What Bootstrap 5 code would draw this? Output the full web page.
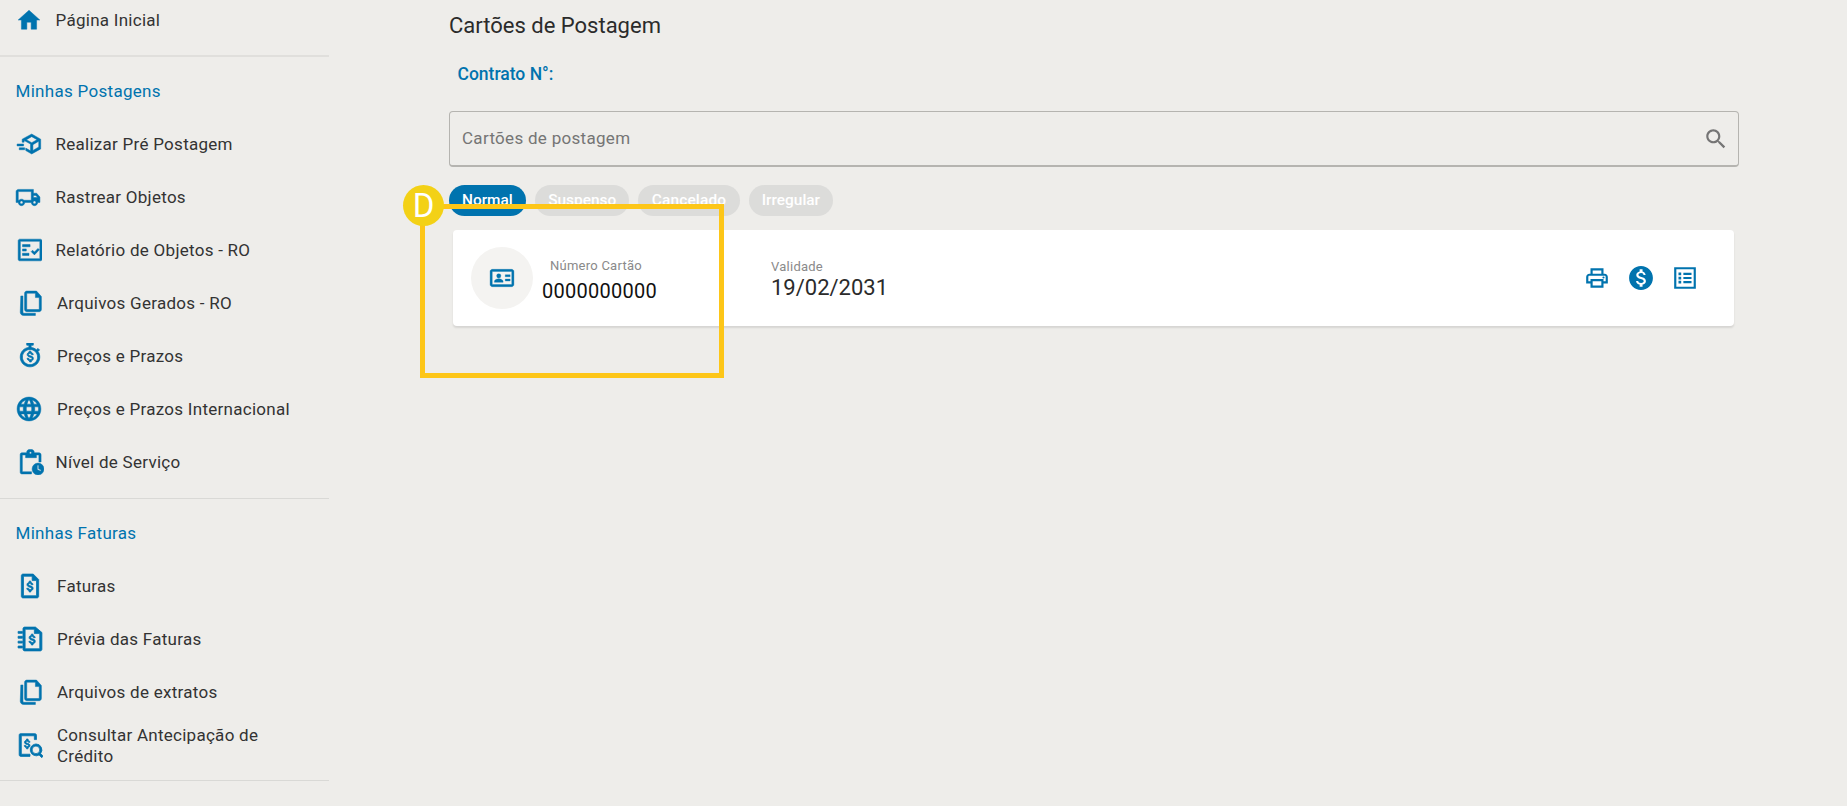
<!DOCTYPE html>
<html lang="pt-BR">
<head>
<meta charset="utf-8">
<title>Cartões de Postagem</title>
<link href="https://cdn.jsdelivr.net/npm/bootstrap@5.3.0/dist/css/bootstrap.min.css" rel="stylesheet">
<style>
html,body{height:806px;overflow:hidden}
body{background:#eeedea;font-family:Roboto,"Liberation Sans",sans-serif;color:#333;position:relative}
.shell{height:806px}
.side{width:329px;flex:none}
.side-rule{height:1px;background:#d9d9d6;margin:0;opacity:1;border:0}
.side-rule.thick{height:2px;background:#e0dfdc;margin-top:15px}
.side-rule.mid{margin-top:10px}
.side-rule.end{margin-top:8px}
.side-head{color:#0073ae;font-size:17px;line-height:21px;letter-spacing:.3px;padding-left:15.500px;margin-top:24px;margin-bottom:15px}
.side-item{height:53px;color:#333;font-size:17px;letter-spacing:.27px;line-height:21px;text-decoration:none}
.side-item.first-row{height:40px}
.side-item.tall-row{height:54px}
.side-item .lbl{display:block;max-width:250px;position:relative;top:.5px}
.side-ico{width:55.500px;flex:none;padding-left:16px;display:flex}
.side-ico.wide{width:57px;padding-left:17px}
.side-ico.globe{padding-left:16px}
.side-ico.clip{padding-left:18px}
.side-ico svg{width:26px;height:26px;fill:#0073ae;stroke:#0073ae;stroke-width:.45}
.side-ico svg.truck{margin-left:-1px}
.side-ico svg.bold{stroke-width:.7}
.main-col{padding-left:120px;width:1410px}
.page-title{font-size:22px;line-height:26px;font-weight:400;color:#2b2b2b;margin:13px 0 0}
.contract{color:#0073ae;font-size:17.500px;line-height:21px;font-weight:500;margin:25px 0 0 8.500px}
.search-box{height:56px;border:1px solid #b5b4b0;border-bottom-width:2px;border-radius:4px;margin:26px 0 0;background:transparent;padding:0 12px}
.search-box input{background:transparent;border:0;outline:0;font-size:17px;letter-spacing:.3px;padding:0;flex:1;color:#757575}
.search-box input::placeholder{color:#757575;opacity:1}
.search-box svg{width:26px;height:26px;fill:#757575;margin-right:-3px}
.chips{margin-top:18px;gap:9px}
.chip-item{height:31px;border-radius:16px;background:#dcdcda;color:#fff;font-size:15.400px;font-weight:500;padding:0 13px;border:0;display:flex;align-items:center}
.chip-item.on{background:#0073ae;padding-right:13.500px}
.chip-item.wider{padding:0 13.500px;letter-spacing:.2px}
.post-card{margin:14px 5px 0 4px;height:96px;border:0;border-radius:4px;box-shadow:0 2px 2px rgba(0,0,0,.1);background:#fff;padding:0 35px 0 18px}
.round-ico{width:62px;height:62px;border-radius:50%;background:#f4f3f1;flex:none}
.round-ico svg{width:26px;height:26px;fill:#0073ae;stroke:#0073ae;stroke-width:.3}
.field-label{font-size:13px;line-height:16px;color:#8a8a8a;letter-spacing:.25px}
.num-col{margin-left:9px;width:229px;padding-top:5px}
.num-col .field-label{padding-left:8px}
.num-val{font-size:20px;line-height:26px;color:#111;letter-spacing:.25px;margin-top:4px}
.date-val{font-size:22px;line-height:26px;color:#2b2b2b}
.date-col{margin-top:3px}
.act-group{gap:18px;margin-left:-1px;position:relative;right:1px}
.act-group svg{width:26px;height:26px;fill:#0073ae;display:block}
.yellow-box{position:absolute;left:420px;top:204px;width:304px;height:174px;border:5px solid #fdc618;pointer-events:none}
.yellow-dot{position:absolute;left:403px;top:185px;width:41px;height:41px;border-radius:50%;background:#f3d116;color:#fff;font-size:33px;font-weight:400;line-height:41px;text-align:center}
</style>
</head>
<body>
<div class="d-flex shell">
  <nav class="side d-flex flex-column">
    <a class="side-item first-row d-flex align-items-center" href="#">
      <span class="side-ico"><svg viewBox="0 0 24 24"><path d="M10 20.500v-6.500h4v6.500h5v-8.500h3L12 3 2 12h3v8.500z"/></svg></span><span class="lbl">Página Inicial</span>
    </a>
    <hr class="side-rule thick">
    <div class="side-head">Minhas Postagens</div>
    <a class="side-item d-flex align-items-center" href="#">
      <span class="side-ico"><svg viewBox="0 0 24 24"><path d="M14.500 2.800 22.800 7.500v9l-8.300 4.700-5.500-3.100v-2.300l4.400 2.500v-6.200L7.500 8.800v1.500H5.700V7.500zm-4.900 5.200 4.900 2.800L19.400 8l-4.900-2.800zm6 9.900 5.400-3.100V9.500l-5.400 3.100zM1 12h6v1.800H1zm2 3.500h5v1.800H3z"/></svg></span><span class="lbl">Realizar Pré Postagem</span>
    </a>
    <a class="side-item d-flex align-items-center" href="#">
      <span class="side-ico"><svg class="truck" viewBox="0 0 24 24"><path d="M20 8.500h-3V5H3C1.900 5 1 5.900 1 7v10h2c0 1.660 1.340 3 3 3s3-1.340 3-3h6c0 1.660 1.340 3 3 3s3-1.340 3-3h2v-5zM6 18.300c-.7 0-1.300-.6-1.300-1.300s.6-1.300 1.300-1.300 1.300.6 1.300 1.300-.6 1.300-1.300 1.300zM15 15H8.200c-.5-.7-1.300-1-2.200-1s-1.700.3-2.200 1H3V7h12zm3 3.300c-.7 0-1.300-.6-1.300-1.300s.6-1.300 1.300-1.300 1.300.6 1.300 1.300-.6 1.300-1.300 1.300zM17 12.500v-2h2.300l1.500 2z"/></svg></span><span class="lbl">Rastrear Objetos</span>
    </a>
    <a class="side-item d-flex align-items-center" href="#">
      <span class="side-ico"><svg viewBox="0 0 24 24"><path d="M3.500 2h19c.8 0 1.500.7 1.500 1.500v17c0 .8-.7 1.500-1.500 1.500h-19C2.700 22 2 21.300 2 20.500v-17C2 2.700 2.700 2 3.500 2zM4 4v16h18V4zM6 7h7v2H6zm0 4h3.500v2H6zm0 4h6v2H6zm8 -1.500 1.300-1.300 1.700 1.700 3.300-3.400 1.300 1.300-4.600 4.700z"/></svg></span><span class="lbl">Relatório de Objetos - RO</span>
    </a>
    <a class="side-item d-flex align-items-center" href="#">
      <span class="side-ico wide"><svg viewBox="0 0 24 24"><path d="M9 1h9l4.500 5v12c0 1.100-.9 2-2 2H9c-1.100 0-2-.9-2-2V3c0-1.100.9-2 2-2zm0 2v15h11.500V7H17V3zM3.500 5.500h2v15c0 .6.400 1 1 1H17v2H6C4.300 23.500 3 22.200 3 20.500z"/></svg></span><span class="lbl">Arquivos Gerados - RO</span>
    </a>
    <a class="side-item d-flex align-items-center" href="#">
      <span class="side-ico wide"><svg class="bold" viewBox="0 0 24 24"><path d="M9 0h6v2h-2v2.100c1.900.2 3.600 1 5 2.200L19.400 5l1.400 1.400-1.400 1.400C20.500 9.300 21 11.100 21 13c0 5-4 9-9 9s-9-4-9-9 3.700-8.600 8-8.900V2H9zm3 6c-3.900 0-7 3.100-7 7s3.100 7 7 7 7-3.100 7-7-3.100-7-7-7zm-.8 1.500h1.600v1.100c1.100.2 2 .9 2.200 2.200h-1.500c-.1-.6-.5-1-1.500-1-.9 0-1.400.4-1.400.9 0 .5.400.8 1.600 1.100 1.500.4 2.900.9 2.900 2.500 0 1.200-.9 1.900-1.900 2.100v1.100h-1.600v-1.100c-1.200-.2-2.200-1-2.300-2.300h1.500c.1.700.6 1.200 1.600 1.200 1.100 0 1.500-.5 1.500-.9 0-.6-.4-.9-1.700-1.300-1.500-.4-2.800-.9-2.800-2.400 0-1.100.8-1.800 1.800-2.100z"/></svg></span><span class="lbl">Preços e Prazos</span>
    </a>
    <a class="side-item d-flex align-items-center" href="#">
      <span class="side-ico wide globe"><svg viewBox="0 0 24 24"><path d="M12 1C5.900 1 1 5.900 1 12s4.900 11 11 11 11-4.900 11-11S18.100 1 12 1zm7.500 6.500h-3c-.4-1.400-.9-2.700-1.600-3.800 2 .7 3.600 2 4.600 3.800zM12 3.200c.8 1.200 1.500 2.700 1.900 4.300h-3.800c.4-1.600 1.100-3.100 1.900-4.300zM3.500 14c-.2-.6-.3-1.300-.3-2s.1-1.400.3-2h3.300c-.1.700-.1 1.300-.1 2s0 1.300.1 2zm1 2.500h3c.4 1.400.9 2.700 1.600 3.800-2-.7-3.600-2-4.600-3.800zm3-9h-3c1-1.800 2.600-3.100 4.600-3.800-.7 1.100-1.200 2.400-1.600 3.800zm4.500 13.300c-.8-1.200-1.500-2.700-1.900-4.300h3.800c-.4 1.600-1.100 3.100-1.900 4.300zm2.300-6.800H9.700c-.1-.7-.2-1.300-.2-2s.1-1.300.2-2h4.600c.1.700.2 1.300.2 2s-.1 1.300-.2 2zm.6 6.300c.7-1.100 1.200-2.400 1.600-3.800h3c-1 1.800-2.600 3.100-4.600 3.800zm2.300-6.300c.1-.7.100-1.300.1-2s0-1.300-.1-2h3.300c.2.600.3 1.300.3 2s-.1 1.400-.3 2z"/></svg></span><span class="lbl">Preços e Prazos Internacional</span>
    </a>
    <a class="side-item d-flex align-items-center" href="#">
      <span class="side-ico clip"><svg viewBox="0 0 24 24"><path d="M3.500 3.500H8V3c0-1.200.9-2.200 2-2.500h3c1.100.3 2 1.300 2 2.500v.5h4.500c1 0 1.800.8 1.800 1.800V12h-2V5.500H17V8H7V5.500H4V21h8.500v2h-9c-1 0-1.500-.8-1.500-1.800V5.300c0-1 .5-1.800 1.500-1.800zM11.500 2.500a1 1 0 1 0 0 2 1 1 0 0 0 0-2zM18.500 13a5.500 5.500 0 1 1 0 11 5.500 5.500 0 0 1 0-11zm-.7 2v4l3 1.500.6-1.100-2.300-1.200V15z"/></svg></span><span class="lbl">Nível de Serviço</span>
    </a>
    <hr class="side-rule mid">
    <div class="side-head">Minhas Faturas</div>
    <a class="side-item d-flex align-items-center" href="#">
      <span class="side-ico wide"><svg class="bold" viewBox="0 0 24 24"><path d="M5.500 1H15l5 5v15.500c0 .8-.7 1.500-1.500 1.500h-13c-.8 0-1.500-.7-1.500-1.500v-19C4 1.700 4.700 1 5.500 1zM6 3v18h12V7h-4V3zm5.200 4.500h1.600v1.200c1.100.2 1.900 1 2 2.100h-1.500c-.1-.6-.5-1-1.300-1-.9 0-1.300.4-1.300.9s.4.800 1.500 1.100c1.400.4 2.700.9 2.700 2.400 0 1.200-.9 1.900-2.100 2.100v1.200h-1.600v-1.200c-1.200-.2-2.100-1-2.200-2.200h1.500c.1.700.6 1.100 1.500 1.100 1 0 1.400-.5 1.400-.9 0-.6-.4-.9-1.600-1.200-1.400-.4-2.600-.9-2.600-2.400 0-1.100.8-1.800 2-2z"/></svg></span><span class="lbl">Faturas</span>
    </a>
    <a class="side-item d-flex align-items-center" href="#">
      <span class="side-ico wide"><svg class="bold" viewBox="0 0 24 24"><path d="M7 1h10l6 5v15.500c0 .8-.7 1.500-1.500 1.500H7c-.8 0-1.500-.7-1.500-1.500V2.500C5.500 1.700 6.200 1 7 1zm.5 2v18H21V7h-5V3zM1 5h4v1.800H1zm0 4.500h4v1.800H1zM1 14h4v1.800H1zm0 4.500h4v1.800H1zm12.200-11h1.600v1.200c1.100.2 1.900 1 2 2.100h-1.500c-.1-.6-.5-1-1.300-1-.9 0-1.300.4-1.300.9s.4.800 1.500 1.100c1.400.4 2.700.9 2.700 2.400 0 1.200-.9 1.900-2.100 2.100v1.200h-1.600v-1.200c-1.200-.2-2.100-1-2.200-2.200h1.500c.1.700.6 1.100 1.500 1.100 1 0 1.400-.5 1.400-.9 0-.6-.4-.9-1.600-1.200-1.400-.4-2.600-.9-2.600-2.400 0-1.100.8-1.800 2-2z"/></svg></span><span class="lbl">Prévia das Faturas</span>
    </a>
    <a class="side-item d-flex align-items-center" href="#">
      <span class="side-ico wide"><svg viewBox="0 0 24 24"><path d="M9 1h9l4.500 5v12c0 1.100-.9 2-2 2H9c-1.100 0-2-.9-2-2V3c0-1.100.9-2 2-2zm0 2v15h11.500V7H17V3zM3.500 5.500h2v15c0 .6.400 1 1 1H17v2H6C4.300 23.500 3 22.200 3 20.500z"/></svg></span><span class="lbl">Arquivos de extratos</span>
    </a>
    <a class="side-item tall-row d-flex align-items-center" href="#">
      <span class="side-ico wide"><svg class="bold" viewBox="0 0 24 24"><path d="M3 1.500h13.500c1 0 1.500.7 1.500 1.500v4h-2V3.500H4v17h8v2H3.500c-1 0-1.500-.7-1.500-1.500V3c0-.9.500-1.500 1-1.500zM8.700 6.500h1.500v1.100c1 .2 1.700.9 1.800 1.900h-1.400c-.1-.5-.4-.9-1.100-.9-.8 0-1.200.4-1.200.8s.3.700 1.300 1c1.200.3 2.400.8 2.400 2.100 0 1.100-.8 1.700-1.800 1.900v1.100H8.700v-1.100c-1.100-.2-1.900-.9-2-2h1.400c.1.600.5 1 1.300 1 .9 0 1.200-.4 1.200-.8 0-.5-.3-.8-1.400-1.100-1.200-.3-2.300-.8-2.300-2.100 0-1 .7-1.600 1.800-1.800zM17.500 11a5.500 5.500 0 0 1 4.300 8.900l2.400 2.400-1.400 1.400-2.400-2.400A5.500 5.500 0 1 1 17.500 11zm0 2a3.500 3.500 0 1 0 0 7 3.500 3.500 0 0 0 0-7z"/></svg></span><span class="lbl">Consultar Antecipação de Crédito</span>
    </a>
    <hr class="side-rule end">
  </nav>
  <main class="main-col">
    <h1 class="page-title">Cartões de Postagem</h1>
    <div class="contract">Contrato N°:</div>
    <div class="search-box d-flex align-items-center">
      <input type="text" placeholder="Cartões de postagem" aria-label="Cartões de postagem">
      <svg viewBox="0 0 24 24"><path d="M15.500 14h-.79l-.28-.27C15.410 12.590 16 11.110 16 9.500 16 5.910 13.090 3 9.500 3S3 5.910 3 9.500 5.910 16 9.500 16c1.610 0 3.090-.59 4.230-1.570l.27.28v.79l5 4.990L20.490 19l-4.990-5zm-6 0C7.010 14 5 11.990 5 9.500S7.010 5 9.500 5 14 7.010 14 9.500 11.990 14 9.500 14z"/></svg>
    </div>
    <div class="chips d-flex">
      <span class="chip-item on">Normal</span>
      <span class="chip-item">Suspenso</span>
      <span class="chip-item wider">Cancelado</span>
      <span class="chip-item">Irregular</span>
    </div>
    <div class="post-card card flex-row align-items-center">
      <div class="round-ico d-flex align-items-center justify-content-center">
        <svg viewBox="0 0 24 24"><path d="M3 4h18c1.100 0 2 .9 2 2v12c0 1.100-.9 2-2 2H3c-1.100 0-2-.9-2-2V6c0-1.100.9-2 2-2zm0 2v12h18V6zm6 2a2 2 0 1 1 0 4 2 2 0 0 1 0-4zm-4 8v-1c0-1.500 2.700-2.300 4-2.300s4 .8 4 2.300v1zm10-7h4.500v1.800H15zm0 4h4.500v1.800H15z"/></svg>
      </div>
      <div class="num-col">
        <div class="field-label">Número Cartão</div>
        <div class="num-val">0000000000</div>
      </div>
      <div class="flex-grow-1 date-col">
        <div class="field-label">Validade</div>
        <div class="date-val">19/02/2031</div>
      </div>
      <div class="act-group d-flex">
        <svg viewBox="0 0 24 24"><path d="M19 8h-1V3H6v5H5c-1.660 0-3 1.340-3 3v6h4v4h12v-4h4v-6c0-1.660-1.340-3-3-3zM8 5h8v3H8V5zm8 14H8v-4h8v4zm4-4h-2v-2H6v2H4v-4c0-.55.45-1 1-1h14c.55 0 1 .45 1 1v4zm-2-4.500a1 1 0 1 1 0 2 1 1 0 0 1 0-2z"/></svg>
        <svg viewBox="0 0 24 24"><path d="M12 1C5.930 1 1 5.930 1 12s4.930 11 11 11 11-4.930 11-11S18.070 1 12 1zm1.410 17.090V20h-2.670v-1.930c-1.710-.36-3.160-1.460-3.270-3.400h1.960c.1 1.050.82 1.870 2.650 1.870 1.960 0 2.400-.98 2.400-1.590 0-.83-.44-1.610-2.670-2.140-2.480-.6-4.180-1.620-4.180-3.670 0-1.720 1.390-2.840 3.110-3.210V4h2.670v1.950c1.860.45 2.790 1.860 2.850 3.390H14.300c-.05-1.110-.64-1.870-2.220-1.870-1.500 0-2.400.68-2.400 1.640 0 .84.65 1.390 2.670 1.910s4.180 1.390 4.180 3.910c-.01 1.830-1.380 2.830-3.120 3.160z"/></svg>
        <svg viewBox="0 0 24 24"><path d="M2 2h20v20H2zm2 2v16h16V4zm2 3h2.500v2.500H6zm4.500 .2H18v2h-7.500zM6 10.800h2.500v2.500H6zm4.500 .2H18v2h-7.500zM6 14.600h2.500v2.500H6zm4.500 .2H18v2h-7.500z"/></svg>
      </div>
    </div>
  </main>
</div>
<div class="yellow-box"></div>
<div class="yellow-dot">D</div>
</body>
</html>
